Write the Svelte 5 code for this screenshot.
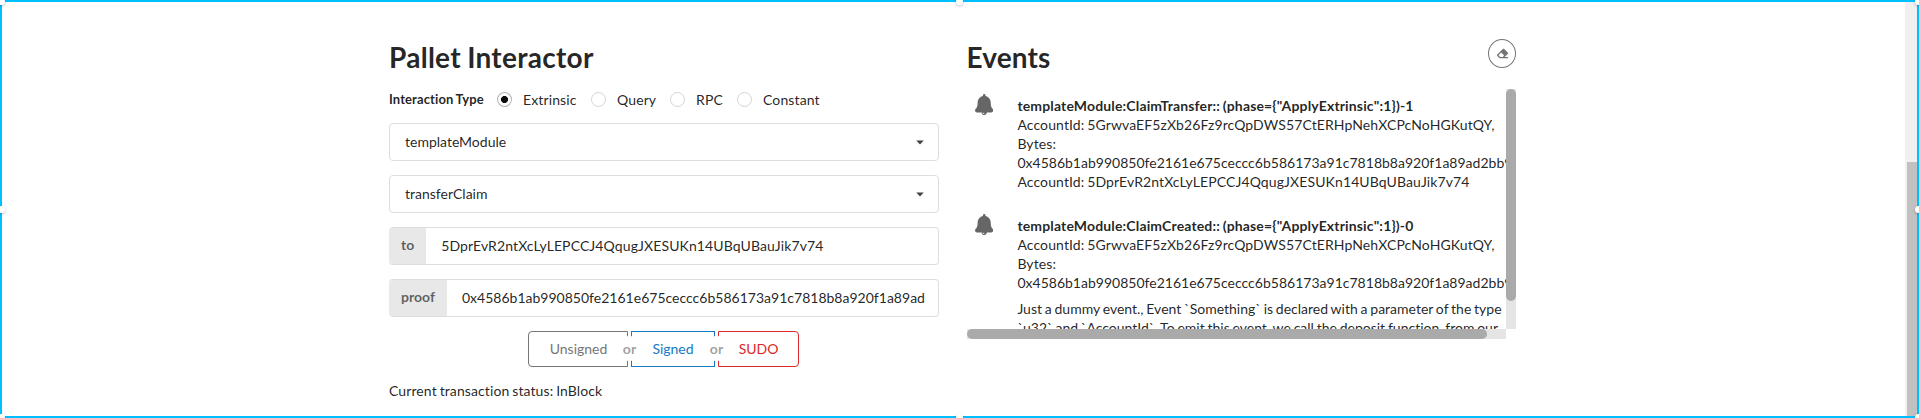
<script>
  const types = ['Extrinsic', 'Query', 'RPC', 'Constant'];
  let selected = $state('Extrinsic');
  const selects = ['templateModule', 'transferClaim'];
  const fields = [
    { label: 'to', kind: 'address', value: '5DprEvR2ntXcLyLEPCCJ4QqugJXESUKn14UBqUBauJik7v74' },
    { label: 'proof', kind: 'hash', value: '0x4586b1ab990850fe2161e675ceccc6b586173a91c7818b8a920f1a89ad' }
  ];
  const hex = { kind: 'hash', text: '0x4586b1ab990850fe2161e675ceccc6b586173a91c7818b8a920f1a89ad2bb9' };
  const account = { kind: 'address', text: 'AccountId: 5GrwvaEF5zXb26Fz9rcQpDWS57CtERHpNehXCPcNoHGKutQY,' };
  const bytes = { kind: 'address', text: 'Bytes:' };
  const events = [
    {
      title: 'templateModule:ClaimTransfer:: (phase={"ApplyExtrinsic":1})-1',
      lines: [account, bytes, hex, { kind: 'address', text: 'AccountId: 5DprEvR2ntXcLyLEPCCJ4QqugJXESUKn14UBqUBauJik7v74' }],
      note: []
    },
    {
      title: 'templateModule:ClaimCreated:: (phase={"ApplyExtrinsic":1})-0',
      lines: [account, bytes, hex],
      note: [
        'Just a dummy event., Event `Something` is declared with a parameter of the type',
        '`u32` and `AccountId`. To emit this event, we call the deposit function, from our'
      ]
    }
  ];
  const handles = ['tl', 'tc', 'tr', 'ml', 'mr', 'bl', 'bc', 'br'];
</script>

<div class="page">
  <main>
    <section class="interactor">
      <h1>Pallet Interactor</h1>
      <div class="types">
        <span class="caption">Interaction Type</span>
        {#each types as type}
          <label class="radio">
            <input type="radio" name="kind" value={type} bind:group={selected} />
            <span>{type}</span>
          </label>
        {/each}
      </div>
      {#each selects as value}
        <div class="control select">
          <span>{value}</span>
          <svg class="caret" width="8" height="5" viewBox="0 0 8 5"><path d="M0.3 0.4h7.4L4 4.4z" /></svg>
        </div>
      {/each}
      {#each fields as field}
        <div class="control field">
          <span class="tag">{field.label}</span>
          <span class="value {field.kind}">{field.value}</span>
        </div>
      {/each}
      <div class="buttons">
        <button class="unsigned">Unsigned</button>
        <span class="or"><b>or</b></span>
        <button class="signed">Signed</button>
        <span class="or"><b>or</b></span>
        <button class="sudo">SUDO</button>
      </div>
      <p class="status">Current transaction status: InBlock</p>
    </section>

    <section class="events">
      <header>
        <h1>Events</h1>
        <button class="clear" aria-label="Clear">
          <svg width="11" height="11" viewBox="0 0 512 512"><path d="M497.941 273.941c18.745-18.745 18.745-49.137 0-67.882l-160-160c-18.745-18.745-49.136-18.746-67.883 0l-256 256c-18.745 18.745-18.745 49.137 0 67.882l96 96A48.004 48.004 0 0 0 144 480h356c6.627 0 12-5.373 12-12v-40c0-6.627-5.373-12-12-12H355.883l142.058-142.059zm-302.627-62.627l137.373 137.373L265.373 416H150.628l-80-80 124.686-124.686z" /></svg>
        </button>
      </header>
      <div class="scroller">
        <div class="feed">
          {#each events as event}
            <article>
              <svg class="bell" width="18.4" height="21" viewBox="0 0 448 512"><path d="M433.884 366.059C411.634 343.809 384 316.118 384 208c0-79.394-57.831-145.269-133.663-157.83A31.845 31.845 0 0 0 256 32c0-17.673-14.327-32-32-32s-32 14.327-32 32c0 6.75 2.095 13.008 5.663 18.17C121.831 62.731 64 128.606 64 208c0 108.118-27.643 135.809-49.893 158.059C-16.042 396.208 5.325 448 48.048 448H160c0 35.346 28.654 64 64 64s64-28.654 64-64h111.943c42.638 0 64.151-51.731 33.941-81.941zM224 472a8 8 0 0 1 0 16c-22.056 0-40-17.944-40-40h16c0 13.234 10.766 24 24 24z" /></svg>
              <div class="content">
                <div class="title">{event.title}</div>
                {#each event.lines as line}<div class={line.kind}>{line.text}</div>{/each}
                {#if event.note.length}
                  <div class="note">
                    {#each event.note as line}<div>{line}</div>{/each}
                  </div>
                {/if}
              </div>
            </article>
          {/each}
        </div>
        <div class="track vertical"><i></i></div>
        <div class="track horizontal"><i></i></div>
      </div>
    </section>
  </main>

  <div class="page-scroll"><i></i></div>
  <div class="frame"></div>
  {#each handles as place}<i class="handle {place}"></i>{/each}
</div>

<style>
  :global(body) { margin: 0; background: #fff; }
  .page {
    position: relative;
    box-sizing: border-box;
    display: flex;
    width: 1919px;
    height: 418px;
    padding-right: 2px;
    overflow: hidden;
    font: 14px/20px Lato, sans-serif;
    font-variant-ligatures: none;
    word-spacing: -0.8px;
    color: rgba(0, 0, 0, 0.87);
  }
  main {
    flex: 1;
    display: grid;
    grid-template-columns: 550px 549px;
    column-gap: 28px;
    align-content: start;
    padding: 39px 0 0 389px;
  }
  h1 { margin: 0; font-size: 28px; line-height: 36px; font-weight: 700; letter-spacing: 0.27px; }
  .events h1 { letter-spacing: 0.1px; margin-left: -0.5px; }
  .types { display: flex; align-items: center; height: 20px; margin: 14px 0; }
  .caption { font-size: 13px; font-weight: 700; width: 108px; letter-spacing: 0.1px; }
  .radio { display: flex; align-items: center; }
  .radio span { position: relative; top: 1px; letter-spacing: 0.12px; }
  .radio:nth-of-type(1) { width: 94px; }
  .radio:nth-of-type(2) { width: 79px; }
  .radio:nth-of-type(3) { width: 67px; }
  .radio input {
    appearance: none;
    box-sizing: border-box;
    flex: none;
    width: 15px;
    height: 15px;
    margin: 0 11px 0 0;
    border: 1px solid #d4d4d5;
    border-radius: 50%;
    background: #fff;
  }
  .radio input:checked {
    border-color: rgba(34, 36, 38, 0.35);
    background: radial-gradient(circle, rgba(0, 0, 0, 0.95) 3.2px, #fff 3.8px);
  }
  .control {
    box-sizing: border-box;
    display: flex;
    align-items: center;
    height: 38px;
    margin-bottom: 14px;
    border: 1px solid #dededf;
    border-radius: 4px;
  }
  .select { justify-content: space-between; padding: 0 14px 0 15px; }
  .caret { fill: #414141; }
  .field { border-left: 0; overflow: hidden; }
  .tag {
    box-sizing: border-box;
    height: 38px;
    padding: 9px 12px 0;
    background: #e8e8e8;
    color: rgba(0, 0, 0, 0.6);
    font-weight: 700;
    line-height: 18px;
  }
  .value { padding-left: 15px; white-space: nowrap; }
  .address { letter-spacing: 0.105px; }
  .hash { letter-spacing: 0.01px; }
  .buttons { display: flex; justify-content: center; height: 36px; margin-right: 1px; }
  .buttons button {
    box-sizing: border-box;
    height: 36px;
    padding: 0;
    border: 1px solid;
    background: none;
    font: 14px/34px Lato, sans-serif;
    text-align: center;
  }
  .buttons .unsigned { width: 100px; padding-left: 1px; border-radius: 4px 0 0 4px; color: #767676; }
  .buttons .signed { width: 84px; color: #1678c2; }
  .buttons .sudo { width: 81px; border-radius: 0 4px 4px 0; color: #db2828; }
  .or { position: relative; width: 3px; }
  .or b {
    position: absolute;
    left: -11px;
    top: 5px;
    width: 25px;
    height: 25px;
    border-radius: 50%;
    background: #fff;
    color: rgba(0, 0, 0, 0.4);
    line-height: 25px;
    text-align: center;
  }
  .status { margin: 14px 0 0; letter-spacing: 0.1px; }
  .events header { display: flex; justify-content: space-between; height: 50px; }
  .clear {
    box-sizing: border-box;
    display: flex;
    align-items: center;
    justify-content: center;
    width: 28px;
    height: 29px;
    padding: 0;
    border: 1px solid #767676;
    border-radius: 50%;
    background: none;
  }
  .clear svg { fill: #767676; }
  .scroller {
    display: grid;
    grid-template: 240px 10px / 539px 10px;
  }
  .feed { overflow: hidden; padding-left: 8px; white-space: nowrap; }
  article { display: flex; gap: 24px; height: 120px; }
  .bell { flex: none; margin-top: 5px; fill: #666; }
  .content { padding-top: 7px; line-height: 19px; }
  .title { font-weight: 700; letter-spacing: 0.15px; }
  .note { margin-top: 7px; }
  .track { background: #e5e5e5; }
  .track i { display: block; border-radius: 5px; background: #aaa; }
  .vertical i { height: 212px; }
  .horizontal i { width: 520px; height: 10px; }
  .page-scroll {
    box-sizing: border-box;
    width: 12px;
    padding: 162px 0 0 2px;
    background: #f0f0f0;
  }
  .page-scroll i { display: block; height: 256px; background: #c1c1c1; }
  .frame { position: absolute; inset: 0; border: 2px solid #00bfff; pointer-events: none; }
  .handle {
    position: absolute;
    width: 7px;
    height: 7px;
    border-radius: 50%;
    background: #fff;
    box-shadow: 0 1px 3px rgba(0, 0, 0, 0.25);
  }
  .tl, .tc, .tr { top: -2px; }
  .ml, .mr { top: 206px; }
  .bl, .bc, .br { bottom: -3px; }
  .tl, .ml, .bl { left: -2px; }
  .tc, .bc { left: 956px; }
  .tr, .mr, .br { right: -3px; }
</style>
